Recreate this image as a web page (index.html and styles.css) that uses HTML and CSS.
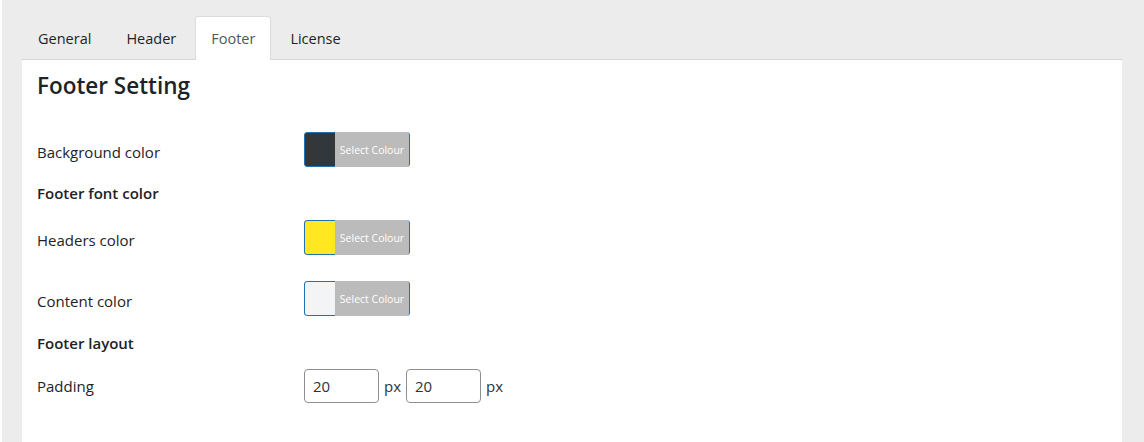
FILE: index.html
```html
<!DOCTYPE html>
<html>
<head>
<meta charset="utf-8">
<link rel="stylesheet" href="styles.css">
</head>
<body>
<div class="wrap">
  <nav class="tabs">
    <a class="tab">General</a>
    <a class="tab">Header</a>
    <a class="tab active">Footer</a>
    <a class="tab">License</a>
  </nav>
  <section class="panel">
    <h2 class="title">Footer Setting</h2>
    <div class="row row-bg">
      <div class="label">Background color</div>
      <div class="picker"><span class="swatch dark"></span><span class="pick-btn">Select Colour</span></div>
    </div>
    <div class="section">Footer font color</div>
    <div class="row row-head">
      <div class="label">Headers color</div>
      <div class="picker"><span class="swatch yellow"></span><span class="pick-btn">Select Colour</span></div>
    </div>
    <div class="row row-content">
      <div class="label">Content color</div>
      <div class="picker"><span class="swatch light"></span><span class="pick-btn">Select Colour</span></div>
    </div>
    <div class="section">Footer layout</div>
    <div class="row row-pad">
      <div class="label">Padding</div>
      <div class="inputs">
        <input class="num" type="text" value="20"><span class="unit">px</span>
        <input class="num" type="text" value="20"><span class="unit">px</span>
      </div>
    </div>
  </section>
</div>
</body>
</html>
```

FILE: styles.css
```css
html, body {
  margin: 0;
  padding: 0;
  height: 100%;
  background: #ffffff;
}
body {
  font-family: "Open Sans", "Noto Sans", sans-serif;
  color: #1d2327;
  padding-left: 2px;
  box-sizing: border-box;
}
.wrap {
  background: #ececec;
  min-height: 100%;
  padding: 16px 22px 0 20px;
  box-sizing: border-box;
  display: flex;
  flex-direction: column;
}
.tabs {
  display: flex;
  gap: 3px;
  height: 43px;
  align-items: stretch;
}
.tab {
  display: flex;
  align-items: center;
  padding: 0 15px;
  font-size: 14.5px;
  color: #1d2327;
  border: 1px solid transparent;
  border-bottom: none;
  border-radius: 3px 3px 0 0;
  box-sizing: border-box;
  position: relative;
}
.active {
  background: #ffffff;
  border-color: #dcdcde;
  color: #50575e;
  margin-bottom: -1px;
  z-index: 1;
}
.panel {
  flex: 1;
  background: #ffffff;
  border-top: 1px solid #d5d5d5;
  padding: 0 15px;
}
.title {
  margin: 10px 0 0;
  font-size: 22.5px;
  font-weight: 600;
  line-height: 32px;
  color: #1d2327;
}
.row {
  display: flex;
  align-items: center;
}
.label {
  width: 267px;
  font-size: 15px;
  padding-top: 5px;
}
.row-bg { margin-top: 30px; }
.row-head { margin-top: 17px; }
.row-content { margin-top: 26px; }
.row-pad { margin-top: 16px; }
.row-pad .label { padding-top: 0; }
.section {
  font-size: 15px;
  font-weight: 600;
  margin-top: 16px;
  line-height: 20px;
}
.row-content + .section { margin-top: 17px; }
.picker {
  display: flex;
  height: 35px;
  width: 106px;
  box-sizing: border-box;
  border-radius: 3px;
  overflow: hidden;
}
.swatch {
  width: 31px;
  height: 100%;
  box-sizing: border-box;
  border: 1px solid #2271b1;
  border-right: none;
  border-radius: 3px 0 0 3px;
}
.dark { background: #32373c; }
.yellow { background: #ffe822; }
.light { background: #f3f4f6; }
.pick-btn {
  flex: 1;
  background: #bbbbbb;
  color: #ffffff;
  font-size: 10.5px;
  display: flex;
  align-items: center;
  justify-content: center;
  border-right: 1px solid #2271b1;
  border-radius: 0 3px 3px 0;
}
.inputs {
  display: flex;
  align-items: center;
  font-size: 15px;
}
.num {
  width: 75px;
  height: 34px;
  box-sizing: border-box;
  border: 1px solid #8c8f94;
  border-radius: 4px;
  padding: 0 8px;
  font-family: inherit;
  font-size: 15px;
  color: #2c3338;
  background: #fff;
}
.unit {
  margin: 0 5px 0 5px;
  color: #2c3338;
}
```
